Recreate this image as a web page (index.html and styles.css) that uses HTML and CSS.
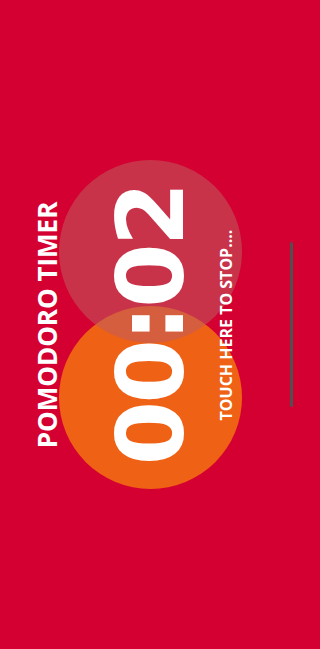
FILE: index.html
```html
<!DOCTYPE html>
<html lang="en">
<head>
<meta charset="utf-8">
<meta name="viewport" content="width=device-width, initial-scale=1">
<title>Pomodoro Timer</title>
<link rel="stylesheet" href="styles.css">
</head>
<body>
<main class="stage">
  <section class="rotor">
    <div class="circles">
      <div class="circle circle-work"></div>
      <div class="circle circle-break"></div>
    </div>
    <div class="texts">
      <h1 class="title">POMODORO TIMER</h1>
      <div class="timer">00:02</div>
      <p class="hint">TOUCH HERE TO STOP....</p>
    </div>
  </section>
  <div class="scroll-indicator"></div>
</main>
</body>
</html>
```
FILE: styles.css
```css
html, body {
  margin: 0;
  padding: 0;
  background: #d50032;
}

.stage {
  position: relative;
  width: 300px;
  height: 649px;
  overflow: hidden;
  display: flex;
  align-items: center;
  justify-content: center;
}

.rotor {
  flex: none;
  width: 360px;
  height: 300px;
  display: grid;
  transform: rotate(-90deg);
}

.circles,
.texts {
  grid-area: 1 / 1;
}

.circles {
  display: flex;
  align-items: center;
  justify-content: center;
}

.circle {
  flex: none;
  width: 183px;
  height: 183px;
  border-radius: 50%;
}

.circle-work {
  background: #ef6114;
}

.circle-break {
  margin-left: -37px;
  background: rgba(189, 93, 95, 0.55);
}

.texts {
  position: relative;
  display: flex;
  flex-direction: column;
  align-items: center;
  padding-top: 34px;
  color: #fff;
}

.title {
  margin: 0 0 45px;
  font-family: "Open Sans", "Liberation Sans", sans-serif;
  font-weight: 700;
  font-size: 26px;
  line-height: 1;
  white-space: nowrap;
}

.timer {
  margin: 0 0 20px;
  font-family: "DejaVu Sans", "Liberation Sans", sans-serif;
  font-weight: 700;
  font-size: 93px;
  line-height: 1;
  letter-spacing: -3px;
  white-space: nowrap;
}

.hint {
  margin: 0;
  font-family: "Open Sans", "Liberation Sans", sans-serif;
  font-weight: 700;
  font-size: 16px;
  line-height: 1;
  white-space: nowrap;
}

.scroll-indicator {
  position: absolute;
  top: 242px;
  right: 7px;
  width: 3px;
  height: 165px;
  border-radius: 2px;
  background: #505050;
}
```
